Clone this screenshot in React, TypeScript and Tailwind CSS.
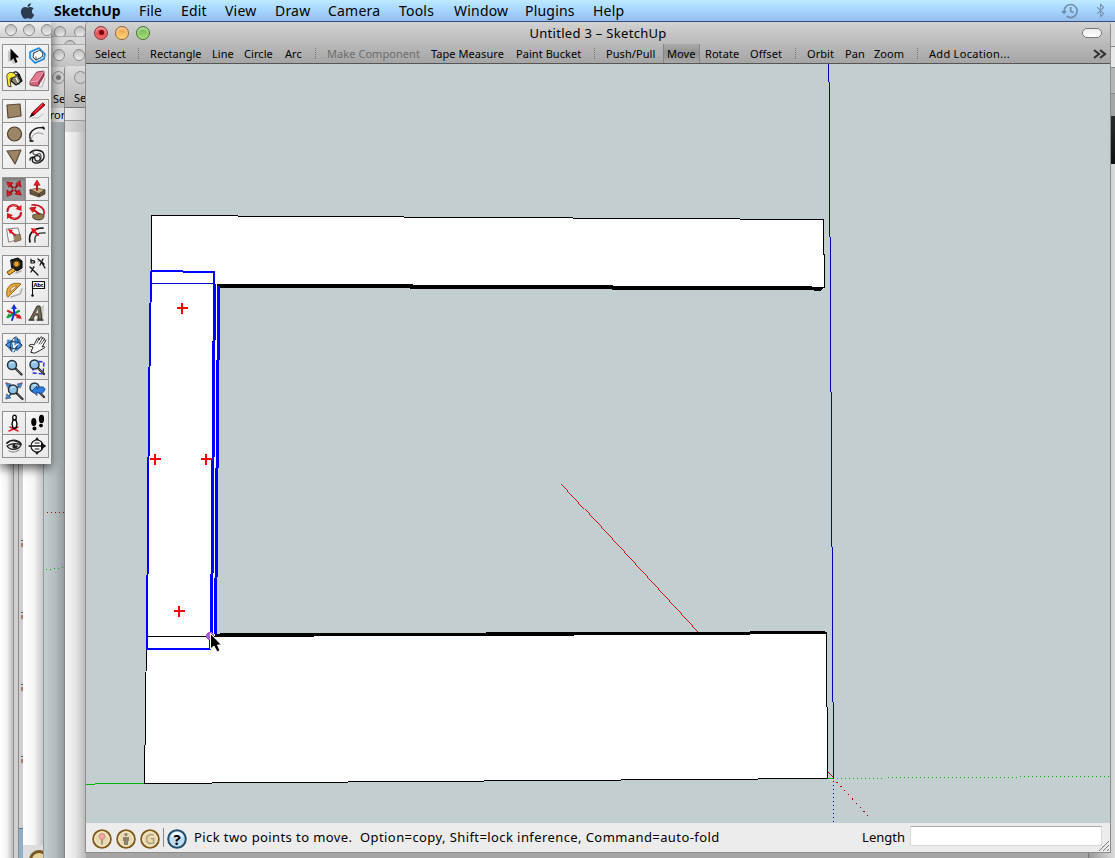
import type { ReactNode } from 'react';
import { Bluetooth } from 'lucide-react';
import { FaApple } from 'react-icons/fa';

const menuItems = [
  { label: 'File', box: 'w-[42px]' },
  { label: 'Edit', box: 'w-[44px]' },
  { label: 'View', box: 'w-[50px]' },
  { label: 'Draw', box: 'w-[53px]' },
  { label: 'Camera', box: 'w-[71px]' },
  { label: 'Tools', box: 'w-[55px]' },
  { label: 'Window', box: 'w-[71px]' },
  { label: 'Plugins', box: 'w-[68px]' },
  { label: 'Help', box: 'w-[50px]' },
];

const toolGroups = [
  { box: 'w-[55px]', items: [{ label: 'Select', box: 'w-[55px]' }] },
  {
    box: 'w-[177px]',
    items: [
      { label: 'Rectangle', box: 'w-[62px]' },
      { label: 'Line', box: 'w-[32px]' },
      { label: 'Circle', box: 'w-[41px]' },
      { label: 'Arc', box: 'w-[42px]' },
    ],
  },
  {
    box: 'w-[279px]',
    items: [
      { label: 'Make Component', box: 'w-[104px] text-[#6c6c6c]' },
      { label: 'Tape Measure', box: 'w-[85px]' },
      { label: 'Paint Bucket', box: 'w-[90px]' },
    ],
  },
  {
    box: 'w-[201px]',
    items: [
      { label: 'Push/Pull', box: 'w-[57px]' },
      { label: 'Move', box: 'w-[37px] mr-[5px] pl-[3px] border-x border-[#858585] bg-linear-to-b from-[#aaa] via-[#929292] to-[#aaa]' },
      { label: 'Rotate', box: 'w-[45px]' },
      { label: 'Offset', box: 'w-[57px]' },
    ],
  },
  {
    box: 'w-[122px]',
    items: [
      { label: 'Orbit', box: 'w-[38px]' },
      { label: 'Pan', box: 'w-[29px]' },
      { label: 'Zoom', box: 'w-[55px]' },
    ],
  },
  { box: 'w-[164px]', items: [{ label: 'Add Location...', box: 'w-[120px] tracking-[0.3px]' }] },
];

const Icon = ({ children }: { children: ReactNode }) => (
  <svg viewBox="0 0 22 22" className="relative -top-[0.5px] -left-[0.5px] w-[22px] h-[22px]" fill="none" strokeLinecap="round" strokeLinejoin="round">
    {children}
  </svg>
);

const Lens = ({ x = 8, y = 8 }: { x?: number; y?: number }) => (
  <g transform={`translate(${x} ${y})`}>
    <path d="M3.500 3.500L9.500 9.500" stroke="#2b2b2b" strokeWidth="2.300" />
    <path d="M4.500 4.500L8.500 8.500" stroke="#8b8b8b" strokeWidth="0.700" />
    <circle r="4.500" fill="#8fc3e6" stroke="#26323a" strokeWidth="1.500" />
    <path d="M-2 -1.500Q-1 -3 1 -2.500" stroke="#e8f6ff" />
  </g>
);

const SelectIcon = () => (
  <Icon>
    <path d="M5 5v12l3-2 2 4 3-1-2-4h3z" fill="#aaa" opacity="0.6" />
    <path d="M7.500 3.500V16l3-2.700 2 4.700 2-1-2-4.500h3.700z" fill="#000" />
  </Icon>
);

const ComponentIcon = () => (
  <Icon>
    <path d="M4 7l9-4 6 6-1 5-9 4-5-5z" fill="#c9e2f4" stroke="#1b87dc" strokeWidth="1.600" />
    <path d="M8 8l6-3 3 4-7 3z" fill="#fff" stroke="#333" strokeWidth="0.900" />
    <path d="M8 8l-1 4 3 3 6-3 1-3M10 12v3" fill="#fff" stroke="#333" strokeWidth="0.900" />
  </Icon>
);

const PaintIcon = () => (
  <Icon>
    <path d="M10 8l6-2 3 7-6 4-5-4z" fill="#8c8270" stroke="#111" strokeWidth="1.200" />
    <path d="M10 7c0-5 6-4 6 2M12 9l4 7M15 8l3 5" stroke="#111" strokeWidth="1.300" />
    <path d="M11 5C6 3 3 6 4 10l1 8 3 1-1-8c1-2 4-1 6-3z" fill="#f6e638" stroke="#222" strokeWidth="0.800" />
    <path d="M13 10l2 4" stroke="#fff" strokeWidth="1.600" />
  </Icon>
);

const EraserIcon = () => (
  <Icon>
    <path d="M6 18l10 1 3-9" stroke="#bbb" strokeWidth="1.200" />
    <path d="M11 4l7-1-6 10-8 1z" fill="#e27a90" />
    <path d="M18 3v5l-6 10v-5z" fill="#a63c56" />
    <path d="M4 14l8-1v5l-8-1z" fill="#d6647e" />
    <path d="M11 4l7-1v5l-6 10-8-1v-3z" stroke="#8c3346" strokeWidth="0.900" />
    <path d="M4 14l8-1 6-10" stroke="#f4bdc8" strokeWidth="0.700" />
  </Icon>
);

const RectangleIcon = () => (
  <Icon><path d="M4 5l13-1 1 12-13 2z" fill="#9c8566" stroke="#594936" strokeWidth="1.200" /></Icon>
);

const PencilIcon = () => (
  <Icon>
    <path d="M6 18h6l5-4" stroke="#bbb" />
    <path d="M17 3l2 2L8 15l-3 1 1-3z" fill="#d7001b" stroke="#650000" strokeWidth="0.800" />
    <path d="M6 13l2 2-5 3z" fill="#111" />
    <path d="M16 5l-7 7" stroke="#ff6f6f" strokeWidth="0.600" />
  </Icon>
);

const CircleIcon = () => (
  <Icon><circle cx="11.500" cy="11" r="7" fill="#9c8566" stroke="#4b3e2e" strokeWidth="1.200" /></Icon>
);

const ArcIcon = () => (
  <Icon>
    <path d="M5 18C1 10 8 3 18 5" stroke="#111" strokeWidth="1.400" />
    <path d="M5 17C6 11 11 8 17 11" stroke="#888" strokeWidth="0.900" />
    <path d="M4 18h3M17 4l1 2" stroke="#111" strokeWidth="1.500" />
  </Icon>
);

const PolygonIcon = () => (
  <Icon><path d="M4 5l14-1-6 14z" fill="#9c8566" stroke="#5c4c38" strokeWidth="1.200" /></Icon>
);

const FreehandIcon = () => (
  <Icon>
    <path d="M4 7c3-4 13-4 14 2s-7 10-11 7c-3-4 5-9 7-5s-5 6-5 2c0-3-5-2-5 1" stroke="#111" strokeWidth="1.300" />
    <path d="M8 4c-3 4 1 6 4 4s4 4 2 7" stroke="#444" strokeWidth="1.100" />
  </Icon>
);

const MoveIcon = () => (
  <Icon>
    <path d="M7 7l8 8M15 7l-8 8" stroke="#9b1017" strokeWidth="2" />
    <path d="M4 4l6 1-4 4zM17 3l1 6-5-3zM18 17l-6-1 4-4zM4 18V12l5 4z" fill="#e0161e" stroke="#96101a" strokeWidth="0.800" />
    <circle cx="11" cy="11" r="1.300" fill="#888" />
  </Icon>
);

const PushPullIcon = () => (
  <Icon>
    <path d="M4 12l7-2 8 2-6 4z" fill="#c6ab7e" stroke="#4a3d28" strokeWidth="0.700" />
    <path d="M4 12v4l9 3v-3zM13 16v3l6-3v-4z" fill="#65533b" stroke="#3b301e" strokeWidth="0.700" />
    <path d="M11 12V6" stroke="#c80d15" strokeWidth="2" />
    <path d="M8 7l3-5 3 5z" fill="#e61923" stroke="#a20a11" strokeWidth="0.600" />
  </Icon>
);

const RotateIcon = () => (
  <Icon>
    <path d="M4.500 10C5 4 12 2 16 7M18 12C17 18 10 20 6 15" stroke="#bc1119" strokeWidth="2.200" />
    <path d="M18.500 4v6l-6-2zM4 18v-6l6 2z" fill="#dc1821" />
    <path d="M6 7c2-3 5-4 8-2M17 14c-2 3-5 4-8 3" stroke="#f06a6c" strokeWidth="0.800" />
  </Icon>
);

const FollowMeIcon = () => (
  <Icon>
    <path d="M7 14l6-2 5 2c1 6-8 6-11 3z" fill="#90764e" stroke="#3b301e" strokeWidth="0.800" />
    <path d="M6 4c8-1 13 4 12 9" stroke="#c01620" strokeWidth="1.700" />
    <path d="M8 9l5 4" stroke="#c50f17" strokeWidth="2" />
    <path d="M4 7l6-1-3 5z" fill="#df1620" stroke="#c50f17" />
  </Icon>
);

const ScaleIcon = () => (
  <Icon>
    <path d="M4 5l11-1 3 11-12 3z" fill="#f8f8f8" stroke="#777" strokeWidth="0.900" />
    <path d="M11 11l6-1 1 6-6 2z" fill="#9b8361" stroke="#6d5b42" strokeWidth="0.700" />
    <path d="M12 11L8 8" stroke="#c81119" strokeWidth="1.800" />
    <path d="M5 5l5 1-3 4z" fill="#e0161f" />
  </Icon>
);

const OffsetIcon = () => (
  <Icon>
    <path d="M4 18C2 10 7 4 17 4" stroke="#111" strokeWidth="1.700" />
    <path d="M9 18c-1-6 2-10 10-9" stroke="#333" strokeWidth="1.400" />
    <path d="M12 11L8 7" stroke="#cf1018" strokeWidth="2" />
    <path d="M5 4l6 1-4 5z" fill="#e5131d" />
  </Icon>
);

const TapeIcon = () => (
  <Icon>
    <path d="M8 4l7-2 4 3v7l-5 3-5-3z" fill="#1f1f1c" stroke="#000" />
    <circle cx="13.500" cy="8" r="2.800" fill="#e3a431" stroke="#7e5a18" />
    <path d="M10 12l-6 4 2 3 6-4z" fill="#eead36" stroke="#5c431b" />
    <path d="M13 17l5-2" stroke="#aaa" strokeWidth="1.500" />
  </Icon>
);

const DimensionIcon = () => (
  <Icon>
    <path d="M6 12l2-2M12 6l2-2" stroke="#888" strokeWidth="0.800" />
    <path d="M4 11l5 5M8 11l-3 5M12 3l6 5M17 3l-3 6M9 16l3 3M16 7l3 5" stroke="#111" strokeWidth="1.300" />
    <path d="M5 3v4h3c2-2-1-3-3-2" stroke="#111" strokeWidth="1.200" />
  </Icon>
);

const ProtractorIcon = () => (
  <Icon>
    <path d="M8 18l9-3 2-5" stroke="#aaa" strokeWidth="1.500" />
    <path d="M4 17C2 8 9 2 18 5L5 18z" fill="#e7ac42" stroke="#92641b" />
    <path d="M7 13c0-4 3-6 7-6z" fill="#f2f2f2" stroke="#92641b" strokeWidth="0.800" />
  </Icon>
);

const TextIcon = () => (
  <Icon>
    <rect x="6.500" y="2.500" width="12" height="7" fill="#fff" stroke="#111" strokeWidth="1.200" />
    <text x="7.500" y="8.200" fontSize="6" fontWeight="bold" fill="#000" textLength="10">Abc</text>
    <path d="M6.500 9v7" stroke="#111" />
    <circle cx="6.500" cy="16.500" r="1.300" fill="#111" />
  </Icon>
);

const AxesIcon = () => (
  <Icon>
    <path d="M5 9l12 6" stroke="#d71920" strokeWidth="2.200" />
    <path d="M5 15l11-6" stroke="#139d3c" strokeWidth="2.200" />
    <path d="M19 17l-6-1 3-4z" fill="#d71920" />
    <path d="M3 16l3-5 2 4z" fill="#139d3c" />
    <path d="M11 12V5M11 12l-2 6" stroke="#1731da" strokeWidth="2" />
    <path d="M8 7l3-5 3 5z" fill="#1731da" />
  </Icon>
);

const Text3DIcon = () => (
  <Icon>
    <path d="M13 6l5-3-1 13-2 2z" fill="#c4c4be" />
    <path d="M4 17L11 4h3l2 13h-4v-4H9l-2 4z" fill="#756b56" stroke="#302c23" strokeWidth="0.900" />
    <path d="M10 11l2-4v4z" fill="#ddd" />
    <path d="M3 18h5M11 18h6" stroke="#302c23" strokeWidth="1.300" />
  </Icon>
);

const OrbitIcon = () => (
  <Icon>
    <path d="M5 6l5 1-1 11-5-6zM12 4l5 2 1 6-4 5-2-5z" fill="#3f98ec" stroke="#2462ab" strokeWidth="0.700" />
    <path d="M3 11c3-5 13-4 16 0-1 5-12 5-16 0zM8 16c-2-6 2-13 5-13s3 8-2 15" stroke="#24374a" />
    <path d="M10 9l1 4 4-3" stroke="#fff" strokeWidth="1.300" />
  </Icon>
);

const HandIcon = () => (
  <Icon>
    <path d="M5 18l2-5-4-1c0-2 4-2 5-1l3-6c1-2 3-1 2 1l1-2c1-2 3-1 2 1 1-2 3-1 2 1 2-1 2 1 1 2l-3 5c2-1 4 0 2 1l-5 3-4 2z" fill="#fff" stroke="#222" />
    <path d="M11 9l2-4M13 10l3-5M15 10l3-4" stroke="#222" strokeWidth="0.800" />
  </Icon>
);

const ZoomIcon = () => <Icon><Lens x={9} y={8} /></Icon>;

const ZoomWindowIcon = () => (
  <Icon>
    <path d="M7 4l11 1-1 12-10-1z" stroke="#292ed2" strokeWidth="1.400" strokeDasharray="3 3" />
    <Lens x={8.5} y={7.5} />
  </Icon>
);

const ZoomExtentsIcon = () => (
  <Icon>
    <path d="M4 4l14 14M18 4L4 18" stroke="#2b4d7c" strokeWidth="1.600" />
    <path d="M3 3l5 1-3 4zM19 3l-5 1 3 4zM3 19l5-1-4-4z" fill="#3f83d5" stroke="#374d66" strokeWidth="0.600" />
    <path d="M3 3h1M18 3h1" stroke="#d33" />
    <Lens x={10} y={9.5} />
  </Icon>
);

const PreviousIcon = () => (
  <Icon>
    <Lens x={8.5} y={7.5} />
    <path d="M6 11l5-5v3c3-3 7-3 8 0-1 5-5 5-8 3v3z" fill="#287ee2" stroke="#153e78" strokeWidth="0.800" />
  </Icon>
);

const PositionCameraIcon = () => (
  <Icon>
    <path d="M7 15l8 4M15 15l-9 4" stroke="#e21b28" strokeWidth="1.500" />
    <path d="M10 8h3l1 4-1 4h-3l-1-4z" fill="#fff" stroke="#000" strokeWidth="1.300" />
    <ellipse cx="11.500" cy="5.500" rx="1.800" ry="2.300" fill="#fff" stroke="#000" strokeWidth="1.300" />
  </Icon>
);

const WalkIcon = () => (
  <Icon>
    <ellipse cx="7.800" cy="10" rx="2.600" ry="4" fill="#000" />
    <ellipse cx="8.500" cy="16.500" rx="2" ry="1.900" fill="#000" />
    <ellipse cx="15.500" cy="7" rx="2.600" ry="4.200" fill="#000" />
    <ellipse cx="15" cy="13.600" rx="2" ry="1.800" fill="#000" />
  </Icon>
);

const LookIcon = () => (
  <Icon>
    <path d="M4 8c4-4 11-3 14 1" stroke="#222" strokeWidth="1.800" />
    <path d="M4 11c4-3 10-3 14-1-2 5-11 6-14 1z" fill="#ddd" stroke="#222" strokeWidth="1.300" />
    <circle cx="12" cy="11" r="2.600" fill="#222" />
    <circle cx="13" cy="10" r="0.800" fill="#fff" />
    <path d="M6 16c4 2 7 1 10-1" stroke="#777" />
  </Icon>
);

const SectionIcon = () => (
  <Icon>
    <circle cx="11" cy="11" r="6" fill="#fff" stroke="#111" strokeWidth="1.100" />
    <path d="M3 11h16" stroke="#111" strokeWidth="1.300" />
    <path d="M15 7l5 4-5 4zM9 5l2-3 2 3zM9 17l2 3 2-3z" fill="#111" />
    <path d="M9 8h4M9 14h4" stroke="#111" />
  </Icon>
);

const paletteGroups = [
  [SelectIcon, ComponentIcon, PaintIcon, EraserIcon],
  [RectangleIcon, PencilIcon, CircleIcon, ArcIcon, PolygonIcon, FreehandIcon],
  [MoveIcon, PushPullIcon, RotateIcon, FollowMeIcon, ScaleIcon, OffsetIcon],
  [TapeIcon, DimensionIcon, ProtractorIcon, TextIcon, AxesIcon, Text3DIcon],
  [OrbitIcon, HandIcon, ZoomIcon, ZoomWindowIcon, ZoomExtentsIcon, PreviousIcon],
  [PositionCameraIcon, WalkIcon, LookIcon, SectionIcon],
];

const MenuBar = () => (
  <header className="relative z-30 h-[22px] flex items-center bg-linear-to-b from-[#bdeaff] via-[#a6d5ff] to-[#94bdec] border-b border-[#33507c] text-[14px] text-black">
    <FaApple className="ml-[19px] w-[17px] h-[18px] text-[#2d3c50]" />
    <span className="ml-[18px] w-[85px] font-bold text-[14px]">SketchUp</span>
    {menuItems.map((item) => (
      <span key={item.label} className={`whitespace-nowrap tracking-[0.2px] ${item.box}`}>{item.label}</span>
    ))}
    <svg viewBox="0 0 18 16" className="ml-auto w-[18px] h-4 text-[#738da8]" fill="none" stroke="currentColor" strokeWidth="1.700">
      <path d="M3.200 8A6.500 6.500 0 1 1 5.500 13M9.700 4v4.500l3 1" />
      <path d="M0 8h6l-3 3.500z" fill="currentColor" stroke="none" />
    </svg>
    <Bluetooth className="ml-[14px] mr-[7px] w-[15px] h-[15px] text-[#7892ad]" strokeWidth={1.7} />
  </header>
);

const GreyLight = () => (
  <span className="shrink-0 w-[12px] h-[12px] rounded-full border border-[#8a8a8a] bg-linear-to-b from-[#bdbdbd] to-[#eee]" />
);

const GreyLightDot = () => (
  <span className="shrink-0 w-[13px] h-[13px] rounded-full border border-[#8a8a8a] bg-[#ccc] flex items-center justify-center">
    <span className="w-[5px] h-[5px] rounded-full bg-[#777]" />
  </span>
);

const Palette = () => (
  <aside className="absolute left-0 top-[22px] z-20 w-[51px] h-[442px] flex flex-col bg-[#ededed] overflow-hidden">
    <div className="h-[16px] shrink-0 flex items-center gap-[6px] pl-[5px] border-b border-[#999] bg-linear-to-b from-[#eee] to-[#d2d2d2]">
      <GreyLight /><GreyLight /><GreyLight />
    </div>
    <div className="flex flex-col gap-2 pt-[6px] pl-[2px]">
      {paletteGroups.map((group, g) => (
        <div key={g} className="w-[47px] grid grid-cols-2 gap-px p-px bg-[#919191]">
          {group.map((Tool, i) => (
            <div key={i} className={Tool === MoveIcon ? 'bg-[#989898] shadow-[inset_0_2px_3px_#777]' : 'bg-linear-to-br from-[#f7f7f7] to-[#e8e8e8]'}>
              <Tool />
            </div>
          ))}
        </div>
      ))}
    </div>
  </aside>
);

const BackgroundWindows = () => (
  <>
    {/* document pages at the far left */}
    <div className="absolute left-0 top-[22px] w-[44px] h-[836px] flex">
      <div className="w-[13px] bg-linear-to-r from-white via-[#f4f4f4] to-[#bdbdbd]" />
      <div className="w-[6px] border-x border-[#8d8d8d] bg-[#d0d0d0]" />
      <div className="w-[4px] bg-[#cfcfcf] flex flex-col justify-end items-end">
        <div className="h-[288px] w-[2px] flex flex-col">
          {[0, 1, 2, 3].map((n) => (
            <div key={n} className="h-[72px] shrink-0 border-t border-[#555]">
              <div className="mt-[2px] h-[4px] bg-[#ad7a62]" />
            </div>
          ))}
        </div>
        <div className="h-[30px] w-full bg-[#8fb0c8] border-t border-[#55768e]" />
      </div>
      <div className="w-[21px] flex flex-col bg-linear-to-r from-white via-[#f6f6f6] to-[#c2c2c2] overflow-hidden">
        <div className="mt-auto h-[13px] bg-[#ddd] pl-[6px] pt-[5px]">
          <div className="w-5 h-5 rounded-full border-[3px] border-[#795821] bg-[#e5d2a1]" />
        </div>
      </div>
    </div>

    <div className="absolute left-[43px] top-[22px] w-[22px] h-[836px] border-l border-[#999] flex flex-col bg-linear-to-r from-[#c3ced1] via-[#b4bec1] to-[#929a9d]">
      <svg viewBox="0 0 21 70" className="mt-[478px] w-[21px] h-[70px]" shapeRendering="crispEdges">
        <path d="M3 12.500h18" stroke="#a00" strokeDasharray="1 3" />
        <path d="M2 69.500h6" stroke="#00a800" strokeDasharray="1 3" />
        <path d="M10 68.500h6" stroke="#00a800" strokeDasharray="1 3" />
        <path d="M18 67.500h3" stroke="#00a800" strokeDasharray="1 3" />
      </svg>
    </div>

    {/* stacked title bars behind the main window */}
    <div className="absolute left-[44px] top-[22px] w-[42px] h-[46px] flex flex-col">
      <div className="h-[14px] flex gap-[8px] pl-[10px] pt-[4px] overflow-hidden bg-linear-to-b from-[#ddd] to-[#c8c8c8]">
        <GreyLight /><GreyLight />
      </div>
      <div className="h-[8px] flex pl-[20px] pt-[3px] overflow-hidden bg-[#d8d8d8] border-t border-[#aaa]">
        <GreyLight />
      </div>
      <div className="h-[24px] flex gap-[8px] pl-[9px] pt-[4px] bg-linear-to-b from-[#dcdcdc] to-[#c0c0c0] border-t border-[#aaa]">
        <GreyLight /><GreyLight />
      </div>
    </div>

    <div className="absolute left-[44px] top-[67px] w-[22px] h-[55px] flex flex-col overflow-hidden bg-linear-to-b from-[#d8d8d8] to-[#b8b8b8] text-[11px] leading-[13px]">
      <span className="mt-[4px] ml-[8px]"><GreyLightDot /></span>
      <span className="mt-[8px] ml-[9px]">Se</span>
      <span className="mt-[3px] pb-1 bg-[#ddd] whitespace-nowrap">Fror</span>
    </div>

    <div className="absolute left-[64px] top-[66px] w-[22px] h-[792px] rounded-tl border-l border-[#858585] flex flex-col overflow-hidden bg-linear-to-r from-[#f8f8f8] via-[#e6e6e6] to-[#b9b9b9]">
      <div className="h-[42px] shrink-0 bg-linear-to-b from-[#ddd] to-[#b3b3b3] border-b border-[#777] pt-[5px] pl-[9px]">
        <div className="w-[13px] h-[13px] rounded-full border border-[#8a8a8a] bg-[#ccc]" />
        <div className="mt-[7px] text-[11px] leading-[14px]">Se</div>
      </div>
      <div className="h-[13px] shrink-0 bg-linear-to-r from-[#eee] to-[#ccc] border-b border-[#999]" />
      <div className="h-[11px] shrink-0 bg-linear-to-r from-[#ddd] to-[#bbb]" />
    </div>

    {/* slivers past the right and bottom window edges */}
    <div className="absolute right-0 top-[22px] w-[26px] h-[836px] flex flex-col bg-linear-to-r from-[#999] to-[#ddd]">
      <div className="h-[25px] bg-[#ddd] border-b border-[#888]" />
      <div className="h-[21px] bg-[#e8e8e8] border-b border-[#888]" />
      <div className="h-[26px] bg-[#b5b5b5] border-b border-[#888]" />
      <div className="h-[22px] bg-[#a5a5a5]" />
      <div className="h-[48px] bg-linear-to-b from-[#2b2b2b] to-[#111]" />
    </div>
    <div className="absolute left-[86px] bottom-0 w-[1003px] h-[6px] bg-[#a4a4a4] border-r border-[#777]" />
  </>
);

const TrafficLight = ({ tone, dot }: { tone: string; dot?: boolean }) => (
  <span className={`w-[14px] h-[14px] rounded-full border flex items-center justify-center shadow-[inset_0_2px_2px_rgba(255,255,255,0.55)] bg-linear-to-b ${tone}`}>
    {dot && <span className="w-[5px] h-[5px] rounded-full bg-[#7a0008]" />}
  </span>
);

const Cross = ({ x, y }: { x: number; y: number }) => (
  <path d={`M${x - 5} ${y}h11M${x} ${y - 5}v11`} stroke="#f00" strokeWidth="2" />
);

const Scene = () => (
  <svg viewBox="86 64 1024 759" className="w-[1024px] h-[759px] block" fill="none" shapeRendering="crispEdges">
    {/* axes */}
    <path d="M828.900 64L833.500 778" stroke="#0000b4" />
    <path d="M833.500 781V823" stroke="#0000b4" strokeDasharray="1 3" />
    <path d="M833 778L871 819" stroke="#a00000" strokeDasharray="1.300 4.300" />
    <path d="M837 778.500H885M888 777.500H1017M1020 776.500H1110" stroke="#00b400" strokeDasharray="1 3" />
    <path d="M86 784.500h9M95 783.500h50M828 778.500h5" stroke="#00b400" />
    <path d="M828 772l5 5" stroke="#a00000" />
    <path d="M561.500 483.500L698.500 632.500" stroke="#d00000" strokeWidth="0.900" />

    {/* rails */}
    <path d="M151.500 215.500L823.500 219.500L824.500 289L151 285z" fill="#fff" />
    <path d="M151.500 272V215.500L823.500 219.500L824.500 288" stroke="#000" />
    <path d="M216 284H411L414 285H611L614 286H811L813 287H825L821 290.500H814L811 290H612V289H410V288H217z" fill="#000" />
    <path d="M146.500 636L144.500 783.500L827.500 778.500L826.500 633L216 636z" fill="#fff" stroke="#000" />
    <path d="M215 634L224 633H486V632H750V631H825L827 634H750V635H574V636H314V637H215z" fill="#000" />

    {/* selected stile */}
    <path d="M151 271L214 272L217 286L215 636H210V649H147z" fill="#fff" />
    <path d="M151 283.500H214" stroke="#0000d8" />
    <path d="M147 636.500H210" stroke="#000" />
    <path d="M151 271L149 400L147 636V649H210V636" stroke="#00f" strokeWidth="2" />
    <path d="M151 271L214 272V286" stroke="#00f" strokeWidth="2" />
    <path d="M214.500 284L211.500 634" stroke="#00f" strokeWidth="3" />
    <path d="M218.700 286L215.500 634" stroke="#00f" strokeWidth="3" />
    <Cross x={182} y={308} />
    <Cross x={155} y={459} />
    <Cross x={206} y={459} />
    <Cross x={179} y={611} />

    <circle cx="210" cy="636" r="4" fill="#a85be0" />
    <path d="M210.500 633.500V649L214 646L217 652L220 650.500L217.500 645H221.500z" fill="#000" stroke="#fff" strokeWidth="1" shapeRendering="auto" />
  </svg>
);

const StatusBadge = ({ children }: { children: ReactNode }) => (
  <svg viewBox="0 0 20 20" className="w-5 h-5" fill="none">
    <circle cx="10" cy="10" r="8.800" fill="#eadab2" stroke="#7f5a1b" strokeWidth="2" />
    <circle cx="10" cy="10" r="7.300" stroke="#f7edcf" />
    {children}
  </svg>
);

const StatusBar = () => (
  <footer className="h-[29px] flex items-center bg-[#ececec] text-[13px] text-black">
    <div className="flex items-center gap-1 pl-[6px] pt-[3px]">
      <StatusBadge>
        <circle cx="10" cy="7.500" r="3" fill="#f2aaa0" stroke="#c48479" strokeWidth="0.800" />
        <path d="M10 10.500v5" stroke="#92836d" strokeWidth="1.500" />
      </StatusBadge>
      <StatusBadge>
        <circle cx="10" cy="5.500" r="1.600" fill="#8b816d" />
        <path d="M7 8h6v4h-1v4H8v-4H7z" fill="#8b816d" />
      </StatusBadge>
      <StatusBadge>
        <text x="10" y="15" textAnchor="middle" fontSize="14" fill="#a89b7a">G</text>
      </StatusBadge>
    </div>
    <div className="ml-[3px] mr-[3px] w-px h-[19px] bg-[#888]" />
    <svg viewBox="0 0 20 20" className="w-5 h-5 mt-[3px]">
      <circle cx="10" cy="10" r="8.800" fill="#c0dcf2" stroke="#234c6b" strokeWidth="2" />
      <path d="M4 8a6 5 0 0 1 12 0z" fill="#f1f9ff" />
      <text x="10" y="15.500" textAnchor="middle" fontSize="15" fontWeight="bold" fill="#000">?</text>
    </svg>
    <span className="ml-[7px] mt-px w-[540px] whitespace-pre tracking-[0.41px]">Pick two points to move.  Option=copy, Shift=lock inference, Command=auto-fold</span>
    <span className="ml-auto mr-[5px] mt-px">Length</span>
    <div className="w-[192px] h-[20px] -mt-[3px] bg-white border border-[#d8d8d8] border-t-[#aaa]" />
    <svg viewBox="0 0 12 12" className="self-end -ml-[4px] w-[12px] h-[12px]" stroke="#777" fill="none">
      <path d="M1 11L11 1M5 11L11 5M9 11L11 9" />
    </svg>
  </footer>
);

const MainWindow = () => (
  <main className="absolute left-[85px] top-[22px] z-10 w-[1026px] h-[831px] flex flex-col border-x border-b border-[#8c8c8c] rounded-t">
    <div className="h-[42px] shrink-0 flex flex-col bg-linear-to-b from-[#d2d2d2] to-[#a5a5a5] border-b border-[#555] rounded-t">
      <div className="relative h-[21px] flex items-center justify-between pl-[8px] pr-[8px]">
        <div className="flex gap-[7px]">
          <TrafficLight tone="from-[#d8343a] to-[#f0686c] border-[#8d3034]" dot />
          <TrafficLight tone="from-[#ee9440] to-[#fcd878] border-[#9c6428]" />
          <TrafficLight tone="from-[#6cb04c] to-[#a8e080] border-[#447431]" />
        </div>
        <span className="absolute inset-x-0 top-[2px] text-center text-[13px] tracking-[0.3px] text-black pointer-events-none">Untitled 3 – SketchUp</span>
        <span className="w-5 h-[10px] rounded-full border-[1.5px] border-[#777] bg-linear-to-b from-[#eee] to-[#fff]" />
      </div>
      <div className="h-5 flex items-center pl-[9px] text-[11px] tracking-[0.06px] text-black">
        {toolGroups.map((group, g) => (
          <div key={g} className={`relative flex items-center ${group.box}`}>
            {group.items.map((item) => (
              <span key={item.label} className={`shrink-0 h-[19px] leading-[19px] whitespace-nowrap ${item.box}`}>{item.label}</span>
            ))}
            {g < toolGroups.length - 1 && <span className="absolute right-[11px] h-[11px] border-l border-dotted border-[#777]" />}
          </div>
        ))}
        <svg viewBox="0 0 14 10" className="mt-[2px] w-[14px] h-[10px]" fill="none" stroke="#333" strokeWidth="2.200">
          <path d="M1 1l5 4-5 4M7 1l5 4-5 4" />
        </svg>
      </div>
    </div>
    <div className="h-[759px] bg-[#c3ced1]">
      <Scene />
    </div>
    <StatusBar />
  </main>
);

export default function App() {
  return (
    <div className="relative w-[1115px] h-[858px] overflow-hidden bg-[#c3ced1] font-['Noto_Sans','Open_Sans',sans-serif] text-black">
      <MenuBar />
      <BackgroundWindows />
      <div className="absolute left-0 top-[24px] z-[5] w-[51px] h-[440px] shadow-[0_4px_10px_rgba(0,0,0,0.65)]" />
      <Palette />
      <MainWindow />
    </div>
  );
}
